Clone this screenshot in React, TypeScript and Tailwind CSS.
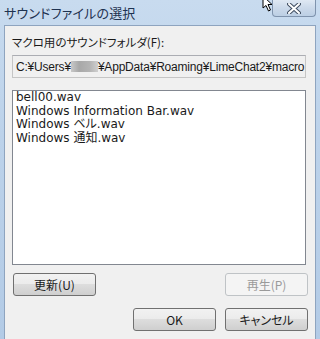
import React from 'react'

const font = "font-['Noto_Sans_CJK_JP','Noto_Sans',sans-serif] [font-feature-settings:'palt']"

const files = ['bell00.wav', 'Windows Information Bar.wav', 'Windows ベル.wav', 'Windows 通知.wav']

function Button({ label, disabled, className }: { label: string; disabled?: boolean; className?: string }) {
  return (
    <button
      type="button"
      className={
        (disabled
          ? 'border-[#bfc3c6] bg-[#f4f4f4] text-[#9a9a9a]'
          : 'border-[#707070] bg-[linear-gradient(180deg,#f2f2f2_0%,#ebebeb_50%,#dddddd_50%,#cfcfcf_100%)] text-[#1a1a1a]') +
        ' flex h-[23px] w-[83px] items-center justify-center rounded-[3px] border text-[12px] leading-none ' +
        (className ?? '')
      }
    >
      {label}
    </button>
  )
}

export default function App() {
  return (
    <div
      className={`relative flex h-[339px] w-[320px] flex-col overflow-hidden bg-[linear-gradient(180deg,#c8dbef_0%,#bcd2ea_40%,#b3cbe6_100%)] ${font}`}
    >
      {/* title bar */}
      <div className="flex h-[25px] shrink-0 items-start justify-between pl-[4px] pr-[4px]">
        <span className="mt-[5px] text-[13px] leading-[16px] tracking-[0.2px] text-[#1e3250]">サウンドファイルの選択</span>
        <div className="flex h-[17px] w-[44px] items-center justify-center rounded-b-[4px] border border-t-0 border-[#7f93ad] bg-[linear-gradient(180deg,#dfe8f3_0%,#cbd9ea_50%,#bccfe4_100%)]">
          <svg width="14" height="11" viewBox="0 0 14 11">
            <path d="M2 1 L12 10 M12 1 L2 10" stroke="#3f4d60" strokeWidth="4" strokeLinecap="round" />
            <path d="M2 1 L12 10 M12 1 L2 10" stroke="#ffffff" strokeWidth="2" strokeLinecap="round" />
          </svg>
        </div>
      </div>

      {/* mouse cursor */}
      <svg className="absolute left-[262px] top-[-4px]" width="12" height="16" viewBox="0 0 12 16">
        <path d="M1 0 L1 12 L4 9.5 L6.5 15 L8.5 14 L6 8.5 L10 8.5 Z" fill="#ffffff" stroke="#000000" strokeWidth="1" />
      </svg>

      {/* client area */}
      <div className="mx-[4px] flex flex-1 flex-col border-x border-t border-[#8ea4bf] bg-[#f0f0f0] px-[7px] text-[#1a1a1a]">
        <div className="mt-[8px] text-[11.5px] leading-[16px]">マクロ用のサウンドフォルダ(F):</div>
        <div className="mt-[5px] flex h-[23px] w-[294px] items-center whitespace-nowrap border border-[#c5c5c5] border-t-[#abadb3] bg-[#f0f0f0] pl-[3px] font-['Liberation_Sans','Noto_Sans_CJK_JP',sans-serif] text-[12px] leading-none tracking-[-0.2px]">
          <span className="shrink-0">C:¥Users¥</span>
          <span className="inline-block h-[11px] w-[27px] shrink-0 bg-[linear-gradient(90deg,#c8c8c8,#a8a8a8_30%,#b4b4b4_70%,#cfcfcf)]" />
          <span className="shrink-0">¥AppData¥Roaming¥LimeChat2¥macro</span>
        </div>
        <div className="mt-[12px] flex h-[175px] w-[294px] flex-col border border-[#828790] bg-white px-[3px] font-['DejaVu_Sans','Noto_Sans_CJK_JP',sans-serif] text-[12px] leading-[13.7px]">
          {files.map((f) => (
            <div key={f} className="whitespace-nowrap">
              {f}
            </div>
          ))}
        </div>
        <div className="mt-[8px] flex justify-between pl-[1px]">
          <Button label="更新(U)" />
          <Button label="再生(P)" disabled />
        </div>
        <div className="mt-[12px] flex justify-end gap-[9px]">
          <Button label="OK" className="w-[81px]" />
          <Button label="キャンセル" />
        </div>
      </div>
    </div>
  )
}
